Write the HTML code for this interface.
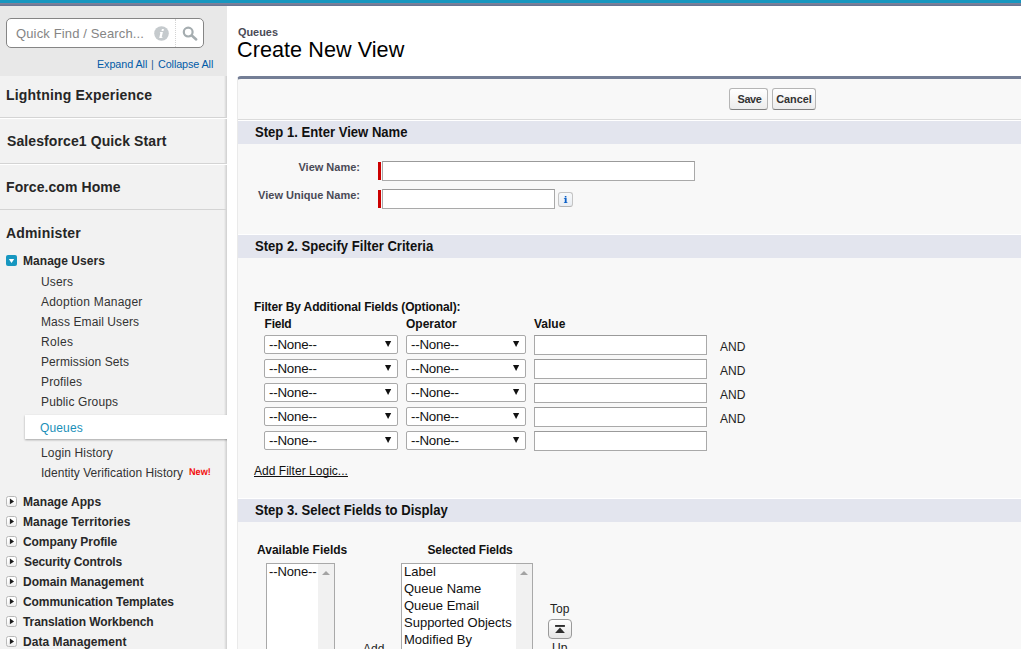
<!DOCTYPE html>
<html>
<head>
<meta charset="utf-8">
<title>Queues: Create New View</title>
<style>
*{box-sizing:border-box;margin:0;padding:0}
html,body{width:1023px;height:649px;overflow:hidden;background:#fff}
body{font-family:"Liberation Sans",sans-serif;font-size:12px;color:#222;position:relative}
.abs{position:absolute;white-space:nowrap;line-height:1}
/* top bars */
#bar1{left:0;top:0;width:1021px;height:3px;background:#1797c0}
#bar2{left:0;top:3px;width:1021px;height:3px;background:linear-gradient(#7e8099 0,#7e8099 1px,#757c97 1px,#757c97 2px,#6a7594 2px)}
/* sidebar */
#sbtop{left:0;top:6px;width:227px;height:70px;background:#e8e8e8}
#sbmenu{left:0;top:76px;width:227px;height:573px;background:linear-gradient(to right,#f2f2f2 0,#f2f2f2 224px,#e4e4e4 225px,#cfcfcf 227px)}
#search{left:6px;top:18px;width:198px;height:30px;background:#fff;border:1px solid #858585;border-radius:5px}
#searchtxt{left:16px;top:27px;font-size:13px;color:#858585;letter-spacing:0.14px}
#sdiv{left:175px;top:19px;width:0;height:28px;border-left:1px dotted #d4d4d4}
.lnk{color:#015ba7;font-size:10.8px}
.sec{left:0;width:227px;height:46px;border-top:1px solid #fff;border-bottom:1px solid #d4d4d4}
.sech{left:6px;font-size:14px;font-weight:bold;color:#262626;letter-spacing:.19px}
.par{left:23px;font-size:12px;font-weight:bold;color:#282828;letter-spacing:.05px}
.chi{left:41px;font-size:12px;color:#333;letter-spacing:.14px}
.box{left:6px;width:11px;height:11px;border:1px solid #b9b9b9;border-radius:2.5px;background:linear-gradient(#fff 40%,#ececec)}
#boxopen{left:6px;top:255px;width:11px;height:11px;border-radius:2px;background:#1797c0}
#hl{left:25px;top:415px;width:212px;height:24px;background:#fff}
#hls{left:25px;top:439px;width:202px;height:1px;background:#c4c4c4}
#hlt{left:25px;top:415px;width:202px;height:1px;background:#e6e6e6}
/* main */
#crumb{left:238px;top:27px;font-size:10.9px;font-weight:bold;color:#4a4a56}
#title{left:237px;top:39px;font-size:21.6px;color:#000;letter-spacing:.06px}
#panel{left:237px;top:76px;width:784px;height:580px;background:#f8f8f8;border-top:3px solid #747e96;border-left:1px solid #eaeaea;border-radius:4px 0 0 0}
#btnline{left:238px;top:119px;width:783px;height:1px;background:#dbdbdb}
.steph{left:238px;width:783px;height:24px;margin-top:-1px;border-top:1px solid #fff;background:#e3e5ee}
.stept{left:255px;font-size:14px;font-weight:bold;color:#111;transform:scaleX(.935);transform-origin:0 0}
.btn{height:22px;border:1px solid #b5b5b5;border-bottom-color:#7f7f7f;border-radius:3px;background:linear-gradient(#fff,#ececec);font-size:10.9px;font-weight:bold;color:#333;text-align:center;line-height:20px}
.lab{font-size:11px;font-weight:bold;color:#4a4a56;text-align:right;width:120px;left:240px}
.inp{background:#fff;border:1px solid #a9a9a9;border-top-color:#9a9a9a}
.req{width:3px;background:#c00}
.b12{font-size:12px;font-weight:bold;color:#111}
.sel{height:19px;background:#fff;border:1px solid #a9a9a9;border-radius:2px;font-size:13.33px;color:#111;line-height:17px;padding-left:4px;letter-spacing:-.24px}
.sel svg{position:absolute;right:4.8px;top:4.85px}
.and{left:720px;font-size:12px;color:#222}
.lst{background:#fff;border:1px solid #a9a9a9;font-size:13px;color:#111}
.trk{position:absolute;right:0;top:0;bottom:0;width:16px;background:#f1f1f1}
.trk:after{content:"";position:absolute;left:4px;top:7px;border-bottom:4px solid #a3a3a3;border-left:4px solid transparent;border-right:4px solid transparent}
.li{position:absolute;left:2px;line-height:17px;white-space:nowrap;margin-top:-1px}
</style>
</head>
<body>
<div class="abs" id="bar1"></div>
<div class="abs" id="bar2"></div>

<!-- SIDEBAR -->
<div class="abs" id="sbtop"></div>
<div class="abs" id="sbmenu"></div>
<div class="abs" id="search"></div>
<div class="abs" id="searchtxt">Quick Find / Search...</div>
<div class="abs" id="sdiv"></div>
<svg class="abs" style="left:153px;top:25px" width="17" height="17" viewBox="0 0 17 17"><circle cx="8.5" cy="8.5" r="7.3" fill="#c5cacd"/><path d="M8.9 4.1 h2 l-.4 1.9 h-2 z M7.0 6.9 L9.9 6.9 L8.7 12.2 L9.6 12.2 L9.4 13 L6.2 13 L7.4 7.7 L6.8 7.7 Z" fill="#fff"/></svg>
<svg class="abs" style="left:181px;top:25px" width="18" height="18" viewBox="0 0 18 18"><circle cx="7.2" cy="7.1" r="4.4" fill="none" stroke="#a5adb0" stroke-width="2.2"/><path d="M10.8 10.5 L15.2 14.5" stroke="#a5adb0" stroke-width="2.5" stroke-linecap="round"/></svg>
<div class="abs lnk" style="left:97px;top:59px;letter-spacing:-.08px">Expand All</div><div class="abs lnk" style="left:151px;top:59px;color:#2d5f94">|</div><div class="abs lnk" style="left:158px;top:59px;letter-spacing:-.1px">Collapse All</div>

<div class="abs sec" style="top:72px;border-top:none"></div>
<div class="abs sec" style="top:118px"></div>
<div class="abs sec" style="top:164px"></div>
<div class="abs sech" style="top:88px">Lightning Experience</div>
<div class="abs sech" style="top:134px;left:7px;letter-spacing:.1px">Salesforce1 Quick Start</div>
<div class="abs sech" style="top:180px;letter-spacing:.08px">Force.com Home</div>
<div class="abs sech" style="top:226px;letter-spacing:.17px">Administer</div>

<svg class="abs" style="left:6px;top:255px" width="11" height="11" viewBox="0 0 11 11"><rect width="11" height="11" rx="2" fill="#1797c0"/><path d="M2.8 4.1 H8.2 L5.5 8.1 Z" fill="#fff"/></svg>
<div class="abs par" style="top:255px">Manage Users</div>
<div class="abs chi" style="top:276px">Users</div>
<div class="abs chi" style="top:296px;letter-spacing:0.22px">Adoption Manager</div>
<div class="abs chi" style="top:316px;letter-spacing:0.09px">Mass Email Users</div>
<div class="abs chi" style="top:336px;letter-spacing:0.3px">Roles</div>
<div class="abs chi" style="top:356px;letter-spacing:0.09px">Permission Sets</div>
<div class="abs chi" style="top:376px">Profiles</div>
<div class="abs chi" style="top:396px">Public Groups</div>
<div class="abs" style="left:0;top:405px;width:227px;height:45px;overflow:hidden"><div style="position:absolute;left:25px;top:10px;width:212px;height:24px;background:#fff;box-shadow:0 1px 2px rgba(0,0,0,.32)"></div></div><div class="abs" id="hl"></div>
<div class="abs chi" style="top:422px;left:40px;color:#1a8fb8">Queues</div>
<div class="abs chi" style="top:447px">Login History</div>
<div class="abs chi" style="top:467px;letter-spacing:.02px">Identity Verification History</div>
<div class="abs" style="left:189px;top:468px;font-size:9.8px;font-weight:bold;color:#f20d0d;text-rendering:geometricPrecision;transform:scaleX(.93);transform-origin:0 0">New!</div>

<svg class="abs" style="left:6px;top:496px" width="11" height="11" viewBox="0 0 11 11"><defs><linearGradient id="g496" x1="0" y1="0" x2="0" y2="1"><stop offset=".4" stop-color="#fff"/><stop offset="1" stop-color="#ebebeb"/></linearGradient></defs><rect x=".5" y=".5" width="10" height="10" rx="2" fill="url(#g496)" stroke="#b9b9b9"/><path d="M3.9 2.6 L8.1 5.4 L3.9 8.2 Z" fill="#1c1c1c"/></svg><div class="abs par" style="top:496px">Manage Apps</div>
<svg class="abs" style="left:6px;top:516px" width="11" height="11" viewBox="0 0 11 11"><defs><linearGradient id="g516" x1="0" y1="0" x2="0" y2="1"><stop offset=".4" stop-color="#fff"/><stop offset="1" stop-color="#ebebeb"/></linearGradient></defs><rect x=".5" y=".5" width="10" height="10" rx="2" fill="url(#g516)" stroke="#b9b9b9"/><path d="M3.9 2.6 L8.1 5.4 L3.9 8.2 Z" fill="#1c1c1c"/></svg><div class="abs par" style="top:516px">Manage Territories</div>
<svg class="abs" style="left:6px;top:536px" width="11" height="11" viewBox="0 0 11 11"><defs><linearGradient id="g536" x1="0" y1="0" x2="0" y2="1"><stop offset=".4" stop-color="#fff"/><stop offset="1" stop-color="#ebebeb"/></linearGradient></defs><rect x=".5" y=".5" width="10" height="10" rx="2" fill="url(#g536)" stroke="#b9b9b9"/><path d="M3.9 2.6 L8.1 5.4 L3.9 8.2 Z" fill="#1c1c1c"/></svg><div class="abs par" style="top:536px;letter-spacing:-0.08px">Company Profile</div>
<svg class="abs" style="left:6px;top:556px" width="11" height="11" viewBox="0 0 11 11"><defs><linearGradient id="g556" x1="0" y1="0" x2="0" y2="1"><stop offset=".4" stop-color="#fff"/><stop offset="1" stop-color="#ebebeb"/></linearGradient></defs><rect x=".5" y=".5" width="10" height="10" rx="2" fill="url(#g556)" stroke="#b9b9b9"/><path d="M3.9 2.6 L8.1 5.4 L3.9 8.2 Z" fill="#1c1c1c"/></svg><div class="abs par" style="top:556px;letter-spacing:-0.11px;left:24px">Security Controls</div>
<svg class="abs" style="left:6px;top:576px" width="11" height="11" viewBox="0 0 11 11"><defs><linearGradient id="g576" x1="0" y1="0" x2="0" y2="1"><stop offset=".4" stop-color="#fff"/><stop offset="1" stop-color="#ebebeb"/></linearGradient></defs><rect x=".5" y=".5" width="10" height="10" rx="2" fill="url(#g576)" stroke="#b9b9b9"/><path d="M3.9 2.6 L8.1 5.4 L3.9 8.2 Z" fill="#1c1c1c"/></svg><div class="abs par" style="top:576px;letter-spacing:0px">Domain Management</div>
<svg class="abs" style="left:6px;top:596px" width="11" height="11" viewBox="0 0 11 11"><defs><linearGradient id="g596" x1="0" y1="0" x2="0" y2="1"><stop offset=".4" stop-color="#fff"/><stop offset="1" stop-color="#ebebeb"/></linearGradient></defs><rect x=".5" y=".5" width="10" height="10" rx="2" fill="url(#g596)" stroke="#b9b9b9"/><path d="M3.9 2.6 L8.1 5.4 L3.9 8.2 Z" fill="#1c1c1c"/></svg><div class="abs par" style="top:596px;letter-spacing:-0.07px">Communication Templates</div>
<svg class="abs" style="left:6px;top:616px" width="11" height="11" viewBox="0 0 11 11"><defs><linearGradient id="g616" x1="0" y1="0" x2="0" y2="1"><stop offset=".4" stop-color="#fff"/><stop offset="1" stop-color="#ebebeb"/></linearGradient></defs><rect x=".5" y=".5" width="10" height="10" rx="2" fill="url(#g616)" stroke="#b9b9b9"/><path d="M3.9 2.6 L8.1 5.4 L3.9 8.2 Z" fill="#1c1c1c"/></svg><div class="abs par" style="top:616px;letter-spacing:-0.09px">Translation Workbench</div>
<svg class="abs" style="left:6px;top:636px" width="11" height="11" viewBox="0 0 11 11"><defs><linearGradient id="g636" x1="0" y1="0" x2="0" y2="1"><stop offset=".4" stop-color="#fff"/><stop offset="1" stop-color="#ebebeb"/></linearGradient></defs><rect x=".5" y=".5" width="10" height="10" rx="2" fill="url(#g636)" stroke="#b9b9b9"/><path d="M3.9 2.6 L8.1 5.4 L3.9 8.2 Z" fill="#1c1c1c"/></svg><div class="abs par" style="top:636px">Data Management</div>

<!-- MAIN -->
<div class="abs" id="crumb">Queues</div>
<div class="abs" id="title">Create New View</div>
<div class="abs" id="panel"></div>
<div class="abs btn" style="left:729px;top:88px;width:39px;letter-spacing:-.4px;padding-left:2px">Save</div>
<div class="abs btn" style="left:772px;top:88px;width:44px">Cancel</div>
<div class="abs" id="btnline"></div>

<div class="abs steph" style="top:121px"></div>
<div class="abs stept" style="top:125.4px">Step 1. Enter View Name</div>
<div class="abs lab" style="top:162px">View Name:</div>
<div class="abs req" style="left:378px;top:162px;height:18px"></div>
<div class="abs inp" style="left:382px;top:161px;width:313px;height:20px"></div>
<div class="abs lab" style="top:190px">View Unique Name:</div>
<div class="abs req" style="left:378px;top:190px;height:18px"></div>
<div class="abs inp" style="left:382px;top:189px;width:173px;height:20px"></div>
<div class="abs" style="left:558px;top:192px;width:15px;height:15px;border:1px solid #c4c4c4;border-bottom-color:#b4b4b4;border-radius:3px;background:linear-gradient(#f7f9fb,#e9edf2)"><svg width="13" height="13" viewBox="0 0 13 13" style="position:absolute;left:0;top:0"><path d="M5.8 2.9h1.6v1.5h-1.6z M4.9 4.9h2.7v4.3h.8v.9h-3.5v-.9h.9v-3.4h-.9z" fill="#0b60c8"/></svg></div>

<div class="abs steph" style="top:235px"></div>
<div class="abs stept" style="top:239.4px">Step 2. Specify Filter Criteria</div>
<div class="abs b12" style="left:254px;top:301px;letter-spacing:-.13px">Filter By Additional Fields (Optional):</div>
<div class="abs b12" style="left:264.5px;top:318px;letter-spacing:-.2px">Field</div>
<div class="abs b12" style="left:406px;top:318px">Operator</div>
<div class="abs b12" style="left:534px;top:318px">Value</div>

<div class="abs sel" style="left:264px;top:335px;width:134px">--None--<svg width="7" height="6" viewBox="0 0 7 6"><path d="M0 0H6.2L3.1 5.9Z" fill="#111"/></svg></div><div class="abs sel" style="left:406px;top:335px;width:120px">--None--<svg width="7" height="6" viewBox="0 0 7 6"><path d="M0 0H6.2L3.1 5.9Z" fill="#111"/></svg></div><div class="abs inp" style="left:534px;top:335px;width:173px;height:20px"></div><div class="abs and" style="top:341px">AND</div>
<div class="abs sel" style="left:264px;top:359px;width:134px">--None--<svg width="7" height="6" viewBox="0 0 7 6"><path d="M0 0H6.2L3.1 5.9Z" fill="#111"/></svg></div><div class="abs sel" style="left:406px;top:359px;width:120px">--None--<svg width="7" height="6" viewBox="0 0 7 6"><path d="M0 0H6.2L3.1 5.9Z" fill="#111"/></svg></div><div class="abs inp" style="left:534px;top:359px;width:173px;height:20px"></div><div class="abs and" style="top:365px">AND</div>
<div class="abs sel" style="left:264px;top:383px;width:134px">--None--<svg width="7" height="6" viewBox="0 0 7 6"><path d="M0 0H6.2L3.1 5.9Z" fill="#111"/></svg></div><div class="abs sel" style="left:406px;top:383px;width:120px">--None--<svg width="7" height="6" viewBox="0 0 7 6"><path d="M0 0H6.2L3.1 5.9Z" fill="#111"/></svg></div><div class="abs inp" style="left:534px;top:383px;width:173px;height:20px"></div><div class="abs and" style="top:389px">AND</div>
<div class="abs sel" style="left:264px;top:407px;width:134px">--None--<svg width="7" height="6" viewBox="0 0 7 6"><path d="M0 0H6.2L3.1 5.9Z" fill="#111"/></svg></div><div class="abs sel" style="left:406px;top:407px;width:120px">--None--<svg width="7" height="6" viewBox="0 0 7 6"><path d="M0 0H6.2L3.1 5.9Z" fill="#111"/></svg></div><div class="abs inp" style="left:534px;top:407px;width:173px;height:20px"></div><div class="abs and" style="top:413px">AND</div>
<div class="abs sel" style="left:264px;top:431px;width:134px">--None--<svg width="7" height="6" viewBox="0 0 7 6"><path d="M0 0H6.2L3.1 5.9Z" fill="#111"/></svg></div><div class="abs sel" style="left:406px;top:431px;width:120px">--None--<svg width="7" height="6" viewBox="0 0 7 6"><path d="M0 0H6.2L3.1 5.9Z" fill="#111"/></svg></div><div class="abs inp" style="left:534px;top:431px;width:173px;height:20px"></div>

<div class="abs" style="left:254px;top:465px;font-size:12px;color:#111;text-decoration:underline;text-decoration-skip-ink:none;letter-spacing:.03px">Add Filter Logic...</div>

<div class="abs steph" style="top:499px"></div>
<div class="abs stept" style="top:503.4px">Step 3. Select Fields to Display</div>
<div class="abs b12" style="left:257px;top:544px">Available Fields</div>
<div class="abs b12" style="left:427.5px;top:544px;letter-spacing:-.15px">Selected Fields</div>
<div class="abs lst" style="left:266px;top:563px;width:69px;height:100px"><div class="trk"></div><div class="li" style="top:0;letter-spacing:-.12px">--None--</div></div>
<div class="abs lst" style="left:401px;top:563px;width:132px;height:100px"><div class="trk"></div>
<div class="li" style="top:0">Label</div><div class="li" style="top:17px">Queue Name</div><div class="li" style="top:34px">Queue Email</div><div class="li" style="top:51px">Supported Objects</div><div class="li" style="top:68px">Modified By</div></div>
<div class="abs" style="left:363px;top:643px;font-size:12px;color:#222">Add</div>
<div class="abs" style="left:550px;top:603px;font-size:12px;color:#222">Top</div>
<div class="abs" style="left:548px;top:619px;width:24px;height:20px;border:1px solid #9a9a9a;border-radius:4px;background:linear-gradient(#fff,#e6e6e6)">
<svg width="22" height="18" viewBox="0 0 22 18" style="position:absolute;left:0;top:0"><rect x="6.1" y="5" width="9.8" height="1.9" fill="#2e2e2e"/><path d="M11 7.6 L15.9 13.1 L6.1 13.1 Z" fill="#2e2e2e"/></svg></div>
<div class="abs" style="left:552px;top:642px;font-size:12px;color:#222">Up</div>
</body>
</html>
